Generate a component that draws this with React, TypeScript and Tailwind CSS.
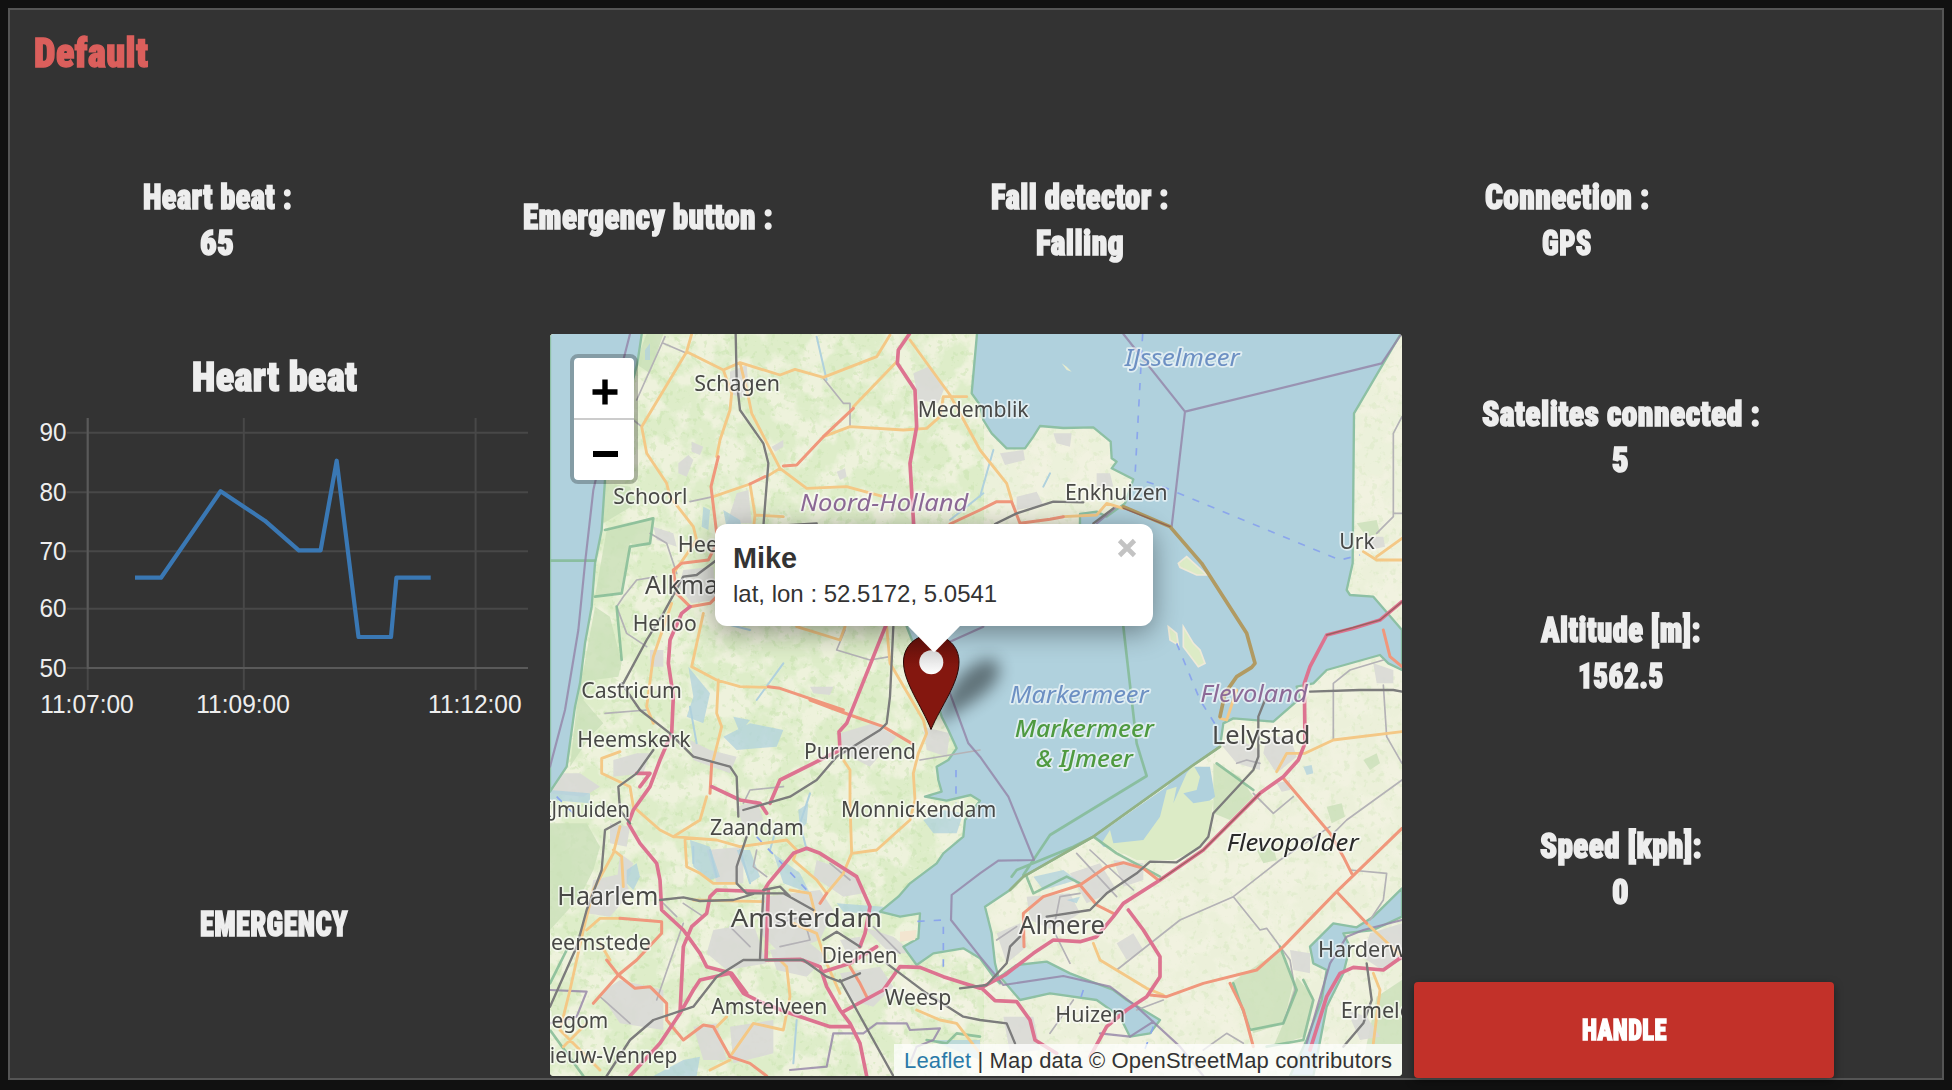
import { useLayoutEffect, useRef, useState } from "react";

/* ---------- condensed heading text, fitted to a given width ---------- */

function Heading({ text, width, size = 34.5, color = "text-[#eeeeee]" }: { text: string; width: number; size?: number; color?: string }) {
  const ref = useRef<HTMLDivElement>(null);
  const [scale, setScale] = useState(1);
  useLayoutEffect(() => {
    if (ref.current) setScale(width / ref.current.offsetWidth);
  }, [width, text]);
  return (
    <div className="h-[46px]" style={{ width }}>
      <div
        ref={ref}
        className={`w-max origin-left font-['Roboto'] leading-[46px] font-black tracking-[0.5px] whitespace-pre [font-stretch:75%] [-webkit-text-stroke:1.5px_currentColor] ${color}`}
        style={{ fontSize: size, transform: `scaleX(${scale})` }}
      >
        {text}
      </div>
    </div>
  );
}

function Stat({ label, labelWidth, value, valueWidth }: { label: string; labelWidth: number; value?: string; valueWidth?: number }) {
  return (
    <div className="flex flex-col items-center">
      <Heading text={label} width={labelWidth} />
      {value && valueWidth ? <Heading text={value} width={valueWidth} /> : null}
    </div>
  );
}

/* ---------- heart beat chart ---------- */

const yTicks = [
  { v: "90", y: 432.7 },
  { v: "80", y: 492.3 },
  { v: "70", y: 551.3 },
  { v: "60", y: 608.7 },
  { v: "50", y: 668 },
];
const xTicks = [
  { v: "11:07:00", x: 87.7 },
  { v: "11:09:00", x: 243.8 },
  { v: "11:12:00", x: 475.6 },
];

function Chart() {
  return (
    <svg className="block h-[330px] w-[528px]" viewBox="10 400 528 330">
      {yTicks.map((t) => (
        <g key={t.v}>
          <path d={`M67 ${t.y}H528`} stroke="#484848" strokeWidth="2" />
          <text x="39.5" y={t.y + 8.5} fontSize="26.5" textLength="27" lengthAdjust="spacingAndGlyphs" fill="#eeeeee" fontFamily="Liberation Sans, sans-serif">
            {t.v}
          </text>
        </g>
      ))}
      {xTicks.map((t) => (
        <g key={t.v}>
          <path d={`M${t.x} 418V690`} stroke="#484848" strokeWidth="2" />
          <text x={t.x - 47.5} y="713" fontSize="26.5" textLength="93.5" lengthAdjust="spacingAndGlyphs" fill="#eeeeee" fontFamily="Liberation Sans, sans-serif">
            {t.v}
          </text>
        </g>
      ))}
      <path d="M87.7 418V668H528" stroke="#5a5a5a" strokeWidth="2" fill="none" />
      <path
        d="M135 577.7H161L220.6 491.3L264.8 520.7L298.8 550.3H320.6L336.7 460.7L358.5 637H391L396.4 577.7H430.7"
        stroke="#3a78b4"
        strokeWidth="4.2"
        fill="none"
        strokeLinejoin="round"
      />
    </svg>
  );
}

/* ---------- map ---------- */

const SEA = "M0 0H277L262 100L225 240L190 350L165 450L155 600L135 700L125 830L105 940L90 1060L75 1130L50 1310L0 1385Z";
const LAKE =
  "M1282 0L1265 190L1290 225L1300 270L1325 310L1370 355L1425 355L1450 320L1470 288L1540 294L1630 292L1682 335L1685 385L1700 395L1685 415L1750 448L1725 520L1670 560L1640 545L1590 552L1590 700L1300 800L1070 890L1090 940L1150 1080L1175 1160L1195 1200L1220 1255L1195 1290L1160 1310L1165 1350L1175 1385L1125 1400L1190 1412L1262 1395L1290 1412L1245 1470L1240 1520L1180 1570L1160 1600L1120 1630L1080 1660L1045 1700L990 1745L1050 1760L1110 1750L1105 1825L1060 1850L1100 1905L1150 1870L1240 1855L1290 1885L1330 1940L1350 1960L1335 1900L1325 1810L1305 1730L1380 1680L1420 1640L1630 1520L1930 1305L2010 1250L2020 1180L2050 1165L2170 1175L2250 1105L2240 1070L2290 1060L2330 1020L2490 975L2515 1000L2556 1020V900L2470 800L2400 795L2390 780L2408 700L2412 250L2556 5Z";
const GOOI = "M1350 1940L1400 1905L1490 1895L1560 1930L1690 1980L1730 2010L1830 2070L1800 2110L1740 2120L1710 2060L1640 2010L1500 1990L1410 2010Z";
const VELUWE = "M2556 1675L2470 1760L2420 1792L2350 1780L2280 1850L2290 1900L2330 1920L2315 2010L2270 2130L2220 2238L2290 2238L2330 2030L2380 1930L2400 1850L2380 1810L2470 1800L2556 1760Z";
const PLAS = "M1635 1520L1850 1370L1910 1310L1980 1310L1995 1400L1930 1450L1850 1500L1760 1560L1660 1550Z";

const built = [
  "M540 125l50 -20 5 60-20 40-35-15z",
  "M1090 130l45-20 50 60-20 50-60 -10z",
  "M560 490l35-10 10 100-50 0-30 20z",
  "M425 335l35 15-10 25-25-10z M385 400l30-25 15 15-20 50-25-10z M665 350l35-20 0 20-25 15z M860 425l25-10 5 25-20 10z",
  "M1350 370l70-10 5 30-60 15z M1510 310l55 0-5 40-40-10z M1640 430l40 0 10 40-50 0z M1400 500l60-15 20 40-80 15z",
  "M400 720l90-10 5 100-70 10-40-50z",
  "M310 590l60 20 10 40-60-20z",
  "M300 960l40 0 0 50-40 0z M780 1070l70 0-10 25-50-5z",
  "M190 1290l70-20 40 0-20 60-90 10z M0 1330l90 0 60 40-50 30-100-10z",
  "M420 1230l60 30 80 20-20 50-110-40z",
  "M870 1210l100-30 70 40-80 90-80-40z M1120 1190l80 20-10 70-60-20z",
  "M180 1480l60 10-10 60-50-10z",
  "M560 1430l60-20 20 60-60 20z M470 1560l110-10 0 110-80 0z",
  "M130 1650l90-20 20 60-60 70-70-10z M210 1570l40 30-20 60-30 0z",
  "M490 1800l120-20 40 120-120 20-60-50z M640 1700l170-20 40 60-40 90-120 40-60-60z",
  "M660 1860l120-20 50 40-60 60-90-20z M800 1590l110 40 30 60-60 10-90-60z",
  "M870 1930l120-20 40 60-60 60-70-20z M540 2090l130-20 0 100-120 30z",
  "M150 1990l60-40 130 30 0 120-130 -20z M430 2090l70-10 30 110-70 0z",
  "M940 1790l90 30 60 50-70 0z M870 1830l60-10 10 30-50 20z",
  "M1340 1810l70-30 20 70-60 50z M1430 1700l130-10 30 60-80 50-70-30z M1560 1630l90-30 50 80-90 40z M1690 1590l90 10 0 50-60 20z",
  "M1700 1840l50-30 30 50-50 30z M1360 2060l90 0 20 100-90 10z",
  "M2010 1240l60-10 60 30 0 60-70-20z M2150 1220l70 0 20 60-60 50-40-60z M2180 1360l40-10 0 30-25 5z",
  "M2440 620l60 0 5 30-50 10z M2470 1000l60 20 0 40-50 0z",
  "M2460 1810l96-30 0 110-60 30-60-40z M2220 1860l60 10 0 60-50-10z M2390 2040l60 20 40 60-60 10z",
];

const woods = [
  "M170 600L310 560L300 650L240 640L210 790L135 800Z",
  "M135 830L180 860L215 1000L205 1040L130 1050L100 1110L160 1180L120 1220L60 1310L80 1130Z",
  "M255 100L290 12H340L300 130Z M165 460L240 470L260 520L160 580Z",
  "M0 1480L110 1480L150 1550L130 1620L90 1700L0 1800Z",
  "M1990 1300L2070 1340L2110 1400L2040 1470L1990 1450Z",
  "M2040 1960L2190 1860L2230 1960L2200 2080L2110 2110Z",
  "M2240 1940L2290 2000L2260 2120L2170 2150L2200 2080Z",
  "M2330 1430l45-10 10 40-40 20z M2440 1290l40-20 10 30-30 20z M2120 1560l50-10 10 40-40 10z",
  "M2480 2000L2556 1950V2238H2430Z",
  "M2420 580l60-10 10 40-40 10z",
];

const motorways = [
  "M1078 12L1045 60L1042 100L1095 180L1100 290L1080 400L1092 600",
  "M1010 880L890 1180L867 1205L870 1260L690 1350L660 1420",
  "M420 830L395 850L360 930L355 1000L370 1100L365 1210L330 1290L300 1370L250 1440L235 1480L270 1540L320 1600L330 1650L335 1740L400 1800L450 1870L470 1910L545 1930L590 1990",
  "M260 1330H300L270 1370",
  "M485 1370L570 1410L630 1420L650 1450",
  "M240 2238L330 2140L390 2050L400 1850L425 1790L470 1750L480 1700L500 1680L640 1685L655 1660L730 1570L770 1555L810 1570L920 1640L960 1730L945 1810L930 1850",
  "M655 1680L648 1890L750 1888L810 1910L830 1970L870 2040L900 2080L930 2140L950 2238",
  "M390 2050L430 1980L450 1950L540 1930L580 1990L640 2020L720 2050L840 2090L900 2090",
  "M820 1925L900 1900L980 1850",
  "M880 2045L1000 1980L1050 1910L1110 1912L1180 1940L1290 1975L1365 1935L1450 1870L1510 1830L1590 1835L1640 1820L1690 1760L1720 1720L1830 1650L1960 1560L2030 1490L2130 1390L2200 1340L2245 1290L2265 1240L2263 1060L2280 1010L2330 915L2410 895L2490 870L2556 815",
  "M1290 1970L1335 2012L1400 2015L1440 2070L1455 2130L1520 2170",
  "M1735 1740L1780 1800L1830 1880L1830 1940L1790 2000L1730 2040L1670 2090L1620 2180",
  "M2280 2160L2330 2000L2370 1930L2410 1912L2500 1920L2556 1880",
];
const trunks = [
  "M505 380L483 470L500 610",
  "M910 235L820 320L740 405L700 408 M645 440L600 462",
  "M370 720L395 700L475 690L495 650 M370 720L380 790L420 830L480 820L500 800",
  "M1290 540L1200 582 M1290 540L1340 515L1385 515L1410 580L1500 568L1540 560",
  "M655 1070L690 1075L880 1140 M780 1110L900 1155L1000 1190L1085 1240",
  "M485 1300L480 1390",
  "M170 1890L205 1935L255 1975L300 1970L350 2020L350 2070L400 2130L460 2085L490 2090L540 2180L600 2200L650 2238",
  "M130 2020L205 1935L260 1890L335 1810L335 1775L210 1765",
  "M900 1910L930 1960L950 2000 M810 1720L830 1690",
  "M1422 1850L1420 1750L1480 1700L1590 1665L1670 1610L1720 1598L1780 1615L1825 1650 M1590 1665L1640 1725L1690 1750",
  "M2200 1345L2340 1510L2380 1580L2405 1630 M2556 1495L2360 1685L2200 1850L2120 1920L1960 1960L1850 2000L1800 1995 M2360 1685L2450 1780",
  "M2040 1960L2080 2040L2110 2150",
  "M2500 900L2520 980L2556 1010",
];
const secondaries = [
  "M425 12L410 65L275 290L290 370L350 460L360 500L430 590L440 630L370 730",
  "M410 65L520 120L570 98L690 135L735 118L820 142L980 80L1020 15",
  "M520 120L545 190L540 240L510 330L500 380",
  "M570 98L595 200L605 250L690 415L770 475L890 470L1000 500 M490 500L600 462 M650 440L690 415 M600 462L615 555L700 560 M615 555L610 600",
  "M820 320L900 290L1060 300L1130 295L1170 260L1180 200L1250 200 M1080 30L1200 195L1290 360L1370 460L1385 510 M910 230L1040 95",
  "M460 850L425 1010L500 1050L570 1070L650 1072 M505 1050L500 1150L515 1190L490 1290 M740 890L870 930L885 890 M1010 890L1020 1000L1120 1170L1130 1210L1105 1270L1090 1330L1095 1410L1080 1470L980 1560L905 1570L900 1420L900 1320L880 1290 M905 1570L880 1630L830 1690",
  "M365 820L310 980L290 1130L310 1180 M210 1265L155 1285L155 1330L240 1370L250 1430L330 1500L370 1520L500 1530L570 1550L710 1530L740 1560L730 1590L800 1650L830 1690",
  "M470 1400L450 1470L370 1520 M405 1530L410 1610L450 1630L490 1660H560 M720 1680L780 1690L800 1770 M430 1710L640 1715 M730 1780L800 1810L830 1900L870 1990",
  "M210 1490L190 1570L130 1680L100 1800L60 1980L30 2100L150 2220 M190 1560L215 1580L220 1670 M110 1800L150 1765L210 1765 M150 1840L180 1890 M40 2150L110 2080",
  "M690 1890L710 1910L720 2000L700 2100L610 2080L540 2180 M480 2220L540 2190 M1100 2040L1170 2070L1220 2080L1290 2170 M500 2090L530 2060",
  "M1540 560L1640 555L1670 520L1720 535 M1630 1840L1650 1890L1790 1975L1840 1995 M2180 1325L2210 1270H2265L2350 1230L2556 1205",
  "M2010 1165L2030 1170L2060 1080 M2440 665L2480 690H2556 M2480 680L2556 625 M2450 1780L2556 1880 M2470 1930L2490 1980L2470 2140",
];
const rails = [
  "M557 12L560 150L570 240L640 340L655 400L640 590L800 580 M500 690L440 735L400 740L340 850L290 930L220 1060",
  "M215 1060L270 1140L360 1210L430 1280L540 1310L560 1340L565 1460 M1020 1100L1030 890 M1020 1100L1010 1180L990 1200L860 1280L800 1350L720 1400L580 1440",
  "M310 1260L260 1330L205 1370L210 1440L240 1480 M210 1475L165 1500L155 1620L110 1740L80 1850L0 2030",
  "M590 1520L560 1610L560 1660L590 1690H700L790 1740 M330 1710L400 1702L450 1713L550 1710L610 1692 M640 1690L630 1885 M640 1680L690 1670L720 1700",
  "M170 2238L240 2130L310 2070L430 2030L500 1940L580 1890H760L830 1940L870 1955L930 1930 M820 1830L860 1805L930 1850 M870 1950L1030 2238 M1010 1900L1130 1990L1240 2060L1290 2070L1370 2080L1395 2140",
  "M1230 1975L1310 1965L1370 1900L1380 1850L1410 1820 M1490 1760L1620 1740L1670 1690L1760 1630L1800 1595L1880 1597L1950 1550L1975 1520L1990 1450L2110 1320L2125 1280L2125 1160L2145 1110 M2280 1085L2430 1080H2530L2556 1085",
  "M1335 582L1400 550L1510 515L1600 517 M1630 580L1690 535 M2450 1900L2465 2010L2440 2080L2380 2150",
];
const minor = [
  "M340 40L410 70 M345 20L260 210 M820 145L880 220H900V290 M250 270L275 290 M300 610L350 640L380 730 M200 830L220 800L260 750L320 740 M200 830L230 910L290 950 M420 515L490 500",
  "M885 900L860 960L960 990L1020 980 M165 1150L290 1140 M2556 260L2530 310V560L2500 590L2480 610 M2530 550H2556 M2350 1230L2350 1060L2400 1020L2500 990 M2500 1065L2510 1220L2556 1300",
  "M2110 1390L2170 1450L2230 1400 M2556 1350L2390 1470L2350 1510 M2340 1490L2190 1590L2050 1700L1890 1770L1700 1920 M2050 1700L2130 1800L2150 1795L2220 1890L2235 1980L2200 2080 M2400 1620L2510 1630L2500 1710L2460 1770",
  "M1290 1260L1110 1290 M330 1710L380 1760 M400 1720L460 1760 M540 1790L600 1850 M150 2000L240 2080 M400 1780L320 2010 M680 1780L760 1760L780 1830L690 1850 M620 1560L610 1610L650 1640 M840 1600L900 1650 M970 1790L1050 1870",
  "M1590 1690L1530 1700L1510 1800L1560 1900 M1580 1570L1700 1700 M1620 1560L1750 1680 M1340 1830L1400 1790 M1500 2110L1570 2010 M1840 2010L1760 2040 M1960 2160L2030 2110L2080 2140 M2060 1300L2090 1290L2130 1300 M580 1420L600 1380L700 1370",
];
const borders = [
  "M240 12L220 90L130 480L105 700L85 900L45 1140L0 1310 M1720 12L1905 245L2495 100L2552 15 M1905 245L1865 590 M1640 580L1700 530",
  "M1190 940L1300 890 M1200 1090L1255 1240L1290 1280L1375 1400L1452 1590L1345 1592L1290 1630L1205 1695L1203 1770L1290 1880L1360 1965L1540 1938L1680 1970L1760 2030L1890 2150L1960 2238",
  "M0 1980L110 1985L80 2060L0 2080 M720 2220L830 2210L850 2110L940 2110L980 2080H1070L1080 2100L1170 2095L1150 2130L1100 2150L1080 2200 M1650 2110L1740 2120L1810 2075 M2270 2140L2340 1900L2390 1820L2440 1800L2556 1770",
];
const reserves = [
  "M0 692H135 M165 600L310 565L300 640L240 650L215 790L135 800 M200 830L215 990 M1720 890L1760 1240L1790 1338L1500 1515L1420 1635",
  "M1385 1640L1400 1620L1570 1550L1630 1520L1700 1570L1830 1640 M1430 1640L1450 1690L1550 1640L1590 1660 M2000 1300L2110 1380 M2050 1960L2100 2100L2200 2080L2240 1980L2190 1850 M2260 1950L2290 2010L2260 2130L2150 2150",
  "M0 1960L50 1860 M100 2238L0 2100 M1130 2130L1190 2140L1220 2110L1290 2120",
];
const ferries = [
  "M1778 12L1755 440 M1790 455L1850 475L2370 690L2430 675 M1880 940L1950 1110L2000 1190 M1218 1320V1420 M1180 1910V1770L1090 1775 M620 1520L770 1680 M20 1400L70 1450 M1600 1980L1590 2010 M1810 2090L1780 2170",
];
const canals = [
  "M800 20L830 150 M1480 470L1500 430 M1200 570L1300 490 M430 1550V1600 M480 1560L500 1640 M570 1560L600 1660 M780 1390L750 1480L770 1560 M740 2070L730 2200 M1330 360L1290 500",
  "M520 880L600 900 M440 1240L420 1130 M1200 1800L1280 1790 M620 1110L700 1000 M680 1490L660 1560",
];
const ponds = [
  "M415 1010L480 1090L460 1180L410 1160L430 1100Z",
  "M520 1220L560 1200L600 1180L700 1200L680 1250L560 1260Z M550 1160l50 10-30 40z",
  "M520 540l50 30 10 45-50 -20z M460 530l20 10-5 60-20-10z",
  "M230 1620l30-20 10 40-20 40-20-20z M420 1530l60 20 30 90-30 10-50-40z M560 1560l40 0 30 80-30 20z M670 1570l80 60 30 60-80-30z",
  "M745 1440l30-20-5 60-20 20z M310 2238L400 2190L450 2180L440 2238Z M1140 2130l150 0v60z",
  "M1450 1640l90-20 40 30-100 30z M1550 1710l40-10-10 20z M2260 1310l25-5 5 25-20 5z M285 60l15-20 0 50-15 0z",
  "M1120 1470L1180 1440L1240 1450L1220 1510L1150 1510Z M860 1720l140 10-10 25-110-10z M0 1380l120 10 0 30-120-10z",
];

type Label = { t: string; x: number; y: number; w?: number; s?: number; c?: string; i?: boolean; k?: number };
const labels: Label[] = [
  { t: "Schagen", x: 433, y: 184, w: 257 },
  { t: "Medemblik", x: 1103, y: 260, w: 333 },
  { t: "Schoorl", x: 190, y: 521, w: 222 },
  { t: "Enkhuizen", x: 1545, y: 509, w: 308 },
  { t: "Noord-Holland", x: 750, y: 543, w: 505, s: 70, c: "#8d6a97", i: true },
  { t: "IJsselmeer", x: 1724, y: 107, w: 345, s: 68, c: "#6d90c3", i: true },
  { t: "Urk", x: 2368, y: 657, w: 106 },
  { t: "Heerhugowaard", x: 383, y: 666 },
  { t: "Alkmaar", x: 285, y: 792, s: 75 },
  { t: "Heiloo", x: 248, y: 902, w: 192 },
  { t: "Castricum", x: 94, y: 1104, w: 302 },
  { t: "Heemskerk", x: 82, y: 1250, w: 340 },
  { t: "Purmerend", x: 762, y: 1286, w: 336 },
  { t: "IJmuiden", x: -16, y: 1462, w: 256 },
  { t: "Monnickendam", x: 873, y: 1460, w: 466 },
  { t: "Zaandam", x: 480, y: 1516, w: 282 },
  { t: "Haarlem", x: 22, y: 1724, w: 303, s: 76 },
  { t: "Amsterdam", x: 542, y: 1791, w: 454, s: 76 },
  { t: "Heemstede", x: -45, y: 1860, w: 348 },
  { t: "Diemen", x: 815, y: 1900, w: 228 },
  { t: "Weesp", x: 1004, y: 2024, w: 200 },
  { t: "Amstelveen", x: 484, y: 2051, w: 348 },
  { t: "Hillegom", x: -90, y: 2093, w: 265 },
  { t: "Nieuw-Vennep", x: -48, y: 2200, w: 430 },
  { t: "Markermeer", x: 1380, y: 1118, w: 416, s: 70, c: "#6d90c3", i: true },
  { t: "Markermeer", x: 1394, y: 1220, w: 418, s: 71, c: "#4f9a41", i: true, k: 500 },
  { t: "& IJmeer", x: 1457, y: 1311, w: 292, s: 71, c: "#4f9a41", i: true, k: 500 },
  { t: "Flevoland", x: 1951, y: 1117, w: 322, s: 70, c: "#8d6a97", i: true },
  { t: "Lelystad", x: 1986, y: 1241, w: 295, s: 74 },
  { t: "Flevopolder", x: 2030, y: 1562, w: 396, s: 72, c: "#2c2c2c", i: true },
  { t: "Almere", x: 1407, y: 1813, w: 258, s: 75 },
  { t: "Huizen", x: 1516, y: 2077, w: 210 },
  { t: "Harderwijk", x: 2304, y: 1882 },
  { t: "Ermelo", x: 2372, y: 2063 },
];

function Lines({ d, stroke, width, dash, opacity }: { d: string[]; stroke: string; width: number; dash?: string; opacity?: number }) {
  return <path d={d.join(" ")} stroke={stroke} strokeWidth={width} strokeDasharray={dash} opacity={opacity} fill="none" strokeLinejoin="round" strokeLinecap={dash ? "butt" : "round"} />;
}

function MapTiles() {
  const water = "#b0d1dd";
  return (
    <svg className="block size-full" viewBox="0 12 2556 2226" preserveAspectRatio="none">
      <defs>
        <filter id="fields" x="0" y="0" width="100%" height="100%" colorInterpolationFilters="sRGB">
          <feTurbulence type="fractalNoise" baseFrequency="0.012" numOctaves="5" seed="7" />
          <feColorMatrix values="0 0 0 0 0.87  0 0 0 0 0.93  0 0 0 0 0.79  6 0 0 0 -2.4" />
        </filter>
        <filter id="plots" x="0" y="0" width="100%" height="100%" colorInterpolationFilters="sRGB">
          <feTurbulence type="fractalNoise" baseFrequency="0.05" numOctaves="3" seed="3" />
          <feColorMatrix values="0 0 0 0 0.76  0 0 0 0 0.88  0 0 0 0 0.66  8 0 0 0 -4.7" />
        </filter>
        <filter id="soft" x="-5%" y="-5%" width="110%" height="110%">
          <feGaussianBlur stdDeviation="1.8" />
        </filter>
        <filter id="softText" x="-2%" y="-2%" width="104%" height="104%">
          <feGaussianBlur stdDeviation="1.2" />
        </filter>
      </defs>
      <rect width="2556" height="2250" fill="#f1f2e0" />
      <path d="M0 0H1300V1300L1200 1700L900 2238H0Z" fill="#eef2dc" />
      <rect width="1300" height="2250" filter="url(#fields)" />
      <rect x="1300" width="1256" height="2250" filter="url(#fields)" opacity="0.25" />
      <rect width="1300" height="2250" filter="url(#plots)" opacity="0.4" />
      <rect x="1300" width="1256" height="2250" filter="url(#plots)" opacity="0.22" />
      <g filter="url(#soft)">
        <path d={woods.join(" ")} fill="#cbe0b9" opacity="0.8" />
        <path d={built.join(" ")} fill="#d9d9d6" opacity="0.9" />
        <path d={ponds.join(" ")} fill={water} opacity="0.75" />
        <Lines d={canals} stroke={water} width={6} />
        <path d={[SEA, LAKE, GOOI, VELUWE].join(" ")} fill={water} stroke="#8dc0a4" strokeWidth="7" strokeLinejoin="round" />
        <path d={PLAS} fill={water} />
        <path d="M1655 1540L1680 1500L1690 1540L1780 1530L1830 1460L1850 1380L1880 1370L1870 1420L1910 1330L1930 1305L1950 1340L1940 1380L1900 1390L1930 1420L1990 1410L1975 1520L1940 1560L1870 1590L1760 1590Z" fill="#dcebc6" />
        <path d="M1885 700L1910 680L1970 735L1940 735L1890 712Z M1855 890L1880 910L1885 945L1860 930Z M1900 890L1930 940L1950 960L1965 1000L1945 1010L1900 950Z" fill="#dcebc6" stroke="#eee9d8" strokeWidth="5" />
        <path d="M1535 100l15 10 15 15-15-5z" fill="#e6ecd0" />
        <path d="M1050 1805l50-5-5 30-45 5z" fill="#f3e5d0" />
        <Lines d={minor} stroke="#b4b2b6" width={5} />
        <Lines d={reserves} stroke="#84bb95" width={8} opacity={0.85} />
        <Lines d={borders} stroke="#9483a8" width={6.5} opacity={0.8} />
        <Lines d={ferries} stroke="#8ba6ec" width={5} dash="22 27" />
        <Lines d={secondaries} stroke="#f4c886" width={8.5} />
        <Lines d={trunks} stroke="#f0977b" width={9} />
        <Lines d={motorways} stroke="#dd7390" width={11} />
        <Lines d={rails} stroke="#7b7b7b" width={7} />
        <Lines d={["M1720 530L1860 590L1955 700L2090 910L2115 1000L2105 1012L2060 1040L2025 1090L2010 1160"]} stroke="#b19a62" width={11} />
        <Lines d={["M1380 1680L1420 1640L1630 1520L1930 1305L2010 1250"]} stroke="#93b286" width={8} />
        <Lines d={["M1720 535L1860 590 M1830 1650L1960 1560L2030 1490L2130 1390 M2330 915L2490 870L2556 815"]} stroke="#8c5a52" width={4} opacity={0.8} />
      </g>
      <g filter="url(#softText)">
        {labels.map((l) => (
          <text
            key={l.t + l.y}
            x={l.x}
            y={l.y}
            fontSize={l.s ?? 65}
            fontFamily="Noto Sans, sans-serif"
            fontStyle={l.i ? "italic" : undefined}
            fontWeight={l.k ?? 400}
            textLength={l.w}
            lengthAdjust="spacingAndGlyphs"
            fill={l.c ?? "#484846"}
            stroke="#ffffff"
            strokeOpacity="0.6"
            strokeWidth="10"
            strokeLinejoin="round"
            paintOrder="stroke"
          >
            {l.t}
          </text>
        ))}
      </g>
    </svg>
  );
}

function MapView() {
  return (
    <div className="relative h-[742px] w-[852px] shrink-0 overflow-hidden rounded-[4px] font-['Liberation_Sans',sans-serif] text-[#333333]">
      <MapTiles />

      {/* marker */}
      <svg className="absolute top-[292px] left-[340px] h-[120px] w-[150px]" viewBox="890 626 150 120">
        <defs>
          <filter id="blur" x="-50%" y="-50%" width="200%" height="200%">
            <feGaussianBlur stdDeviation="8" />
          </filter>
          <linearGradient id="hole" x1="0" y1="0" x2="0" y2="1">
            <stop offset="0" stopColor="#d8d8d8" />
            <stop offset="0.7" stopColor="#f2f2f2" />
            <stop offset="1" stopColor="#ffffff" />
          </linearGradient>
          <linearGradient id="pin" x1="0" y1="0" x2="0" y2="1">
            <stop offset="0" stopColor="#64110b" />
            <stop offset="0.35" stopColor="#84170f" />
          </linearGradient>
        </defs>
        <path d="M931 729C945 705 950 678 975 664C990 654 1003 660 999 674C993 696 958 708 931 729Z" fill="#000" opacity="0.45" filter="url(#blur)" />
        <path d="M931 729.5C922 706 903.5 683 903.5 662C903.5 646 916 635 931 635C947 635 959 646 959 662C959 683 941 706 931 729.5Z" fill="url(#pin)" stroke="#2a0805" strokeWidth="1" />
        <circle cx="931.3" cy="662.3" r="12" fill="url(#hole)" />
      </svg>

      {/* popup */}
      <div className="absolute top-[190px] left-[165px] h-[102px] w-[438px] rounded-xl bg-white px-[18px] pt-[17px] shadow-[0_6px_28px_rgba(0,0,0,0.4)]">
        <div className="text-[28.8px] leading-[34px] font-bold">Mike</div>
        <div className="pt-[4px] text-[24px] leading-[30px]">lat, lon : 52.5172, 5.0541</div>
        <svg className="absolute top-[13.5px] right-[16px] size-5" viewBox="0 0 20 20">
          <path d="M2.5 2.5L17.5 17.5M17.5 2.5L2.5 17.5" stroke="#c3c3c3" strokeWidth="4.6" />
        </svg>
      </div>
      <div className="absolute top-[292px] left-[358px] h-[26px] w-[52px] bg-white [clip-path:polygon(0_0,100%_0,54%_94%,50%_100%,46%_94%)]" />

      {/* zoom control */}
      <div className="absolute top-5 left-5 flex w-[68px] flex-col overflow-hidden rounded-lg border-4 border-black/25 bg-clip-padding">
        <div className="flex h-[62px] items-center justify-center rounded-t-[4px] border-b-2 border-[#cccccc] bg-white pt-[8px] pl-[2px]">
          <svg className="size-[26px]" viewBox="0 0 26 26">
            <path d="M0.5 13H25.5M13 0.5V25.5" stroke="#000" strokeWidth="5.4" />
          </svg>
        </div>
        <div className="flex h-[60px] items-center justify-center rounded-b-[4px] bg-white pt-[8px] pl-[2px]">
          <span className="h-[5.4px] w-[25px] bg-black" />
        </div>
      </div>

      {/* attribution */}
      <div className="absolute right-0 bottom-0 flex h-8 w-[508px] items-center bg-white/75 pt-px pl-[10px] text-[22px] leading-8 tracking-[0.16px] whitespace-pre">
        <span className="text-[#2a7aa8]">Leaflet</span> | Map data © OpenStreetMap contributors
      </div>
    </div>
  );
}

/* ---------- page ---------- */

export default function App() {
  return (
    <div className="h-[1090px] w-[1952px] overflow-hidden bg-[#111111] p-2">
      <main className="h-[1072px] w-[1936px] border-2 border-[#555555] bg-[#333333]">
        <header className="pt-5 pl-[24px]">
          <Heading text="Default" width={114} size={41.5} color="text-[#db5f5c]" />
        </header>

        <section className="grid h-[258px] grid-cols-[414px_448px_416px_558px] items-start pt-[98px]">
          <Stat label="Heart beat :" labelWidth={149} value="65" valueWidth={34} />
          <div className="pt-5">
            <Stat label="Emergency button :" labelWidth={250} />
          </div>
          <Stat label="Fall detector :" labelWidth={178} value="Falling" valueWidth={88} />
          <Stat label="Connection :" labelWidth={165} value="GPS" valueWidth={50} />
        </section>

        <section className="flex gap-3">
          <div className="flex w-[528px] shrink-0 flex-col items-center pt-5">
            <Heading text="Heart beat" width={165} size={41.5} />
            <Chart />
            <div className="pt-[171px]">
              <Heading text="EMERGENCY" width={148} />
            </div>
          </div>

          <MapView />

          <div className="flex w-[420px] shrink-0 flex-col pt-[57px]">
            <div className="flex w-[413px] flex-col gap-[124px]">
              <Stat label="Satelites connected :" labelWidth={278} value="5" valueWidth={17} />
              <Stat label="Altitude [m]:" labelWidth={160} value="1562.5" valueWidth={86} />
              <Stat label="Speed [kph]:" labelWidth={162} value="0" valueWidth={17} />
            </div>
            <button className="mt-[67px] flex h-24 items-center justify-center rounded-[4px] bg-[#c23129] shadow-[0_3px_10px_rgba(0,0,0,0.4)]">
              <Heading text="HANDLE" width={85} size={30} color="text-white" />
            </button>
          </div>
        </section>
      </main>
    </div>
  );
}
